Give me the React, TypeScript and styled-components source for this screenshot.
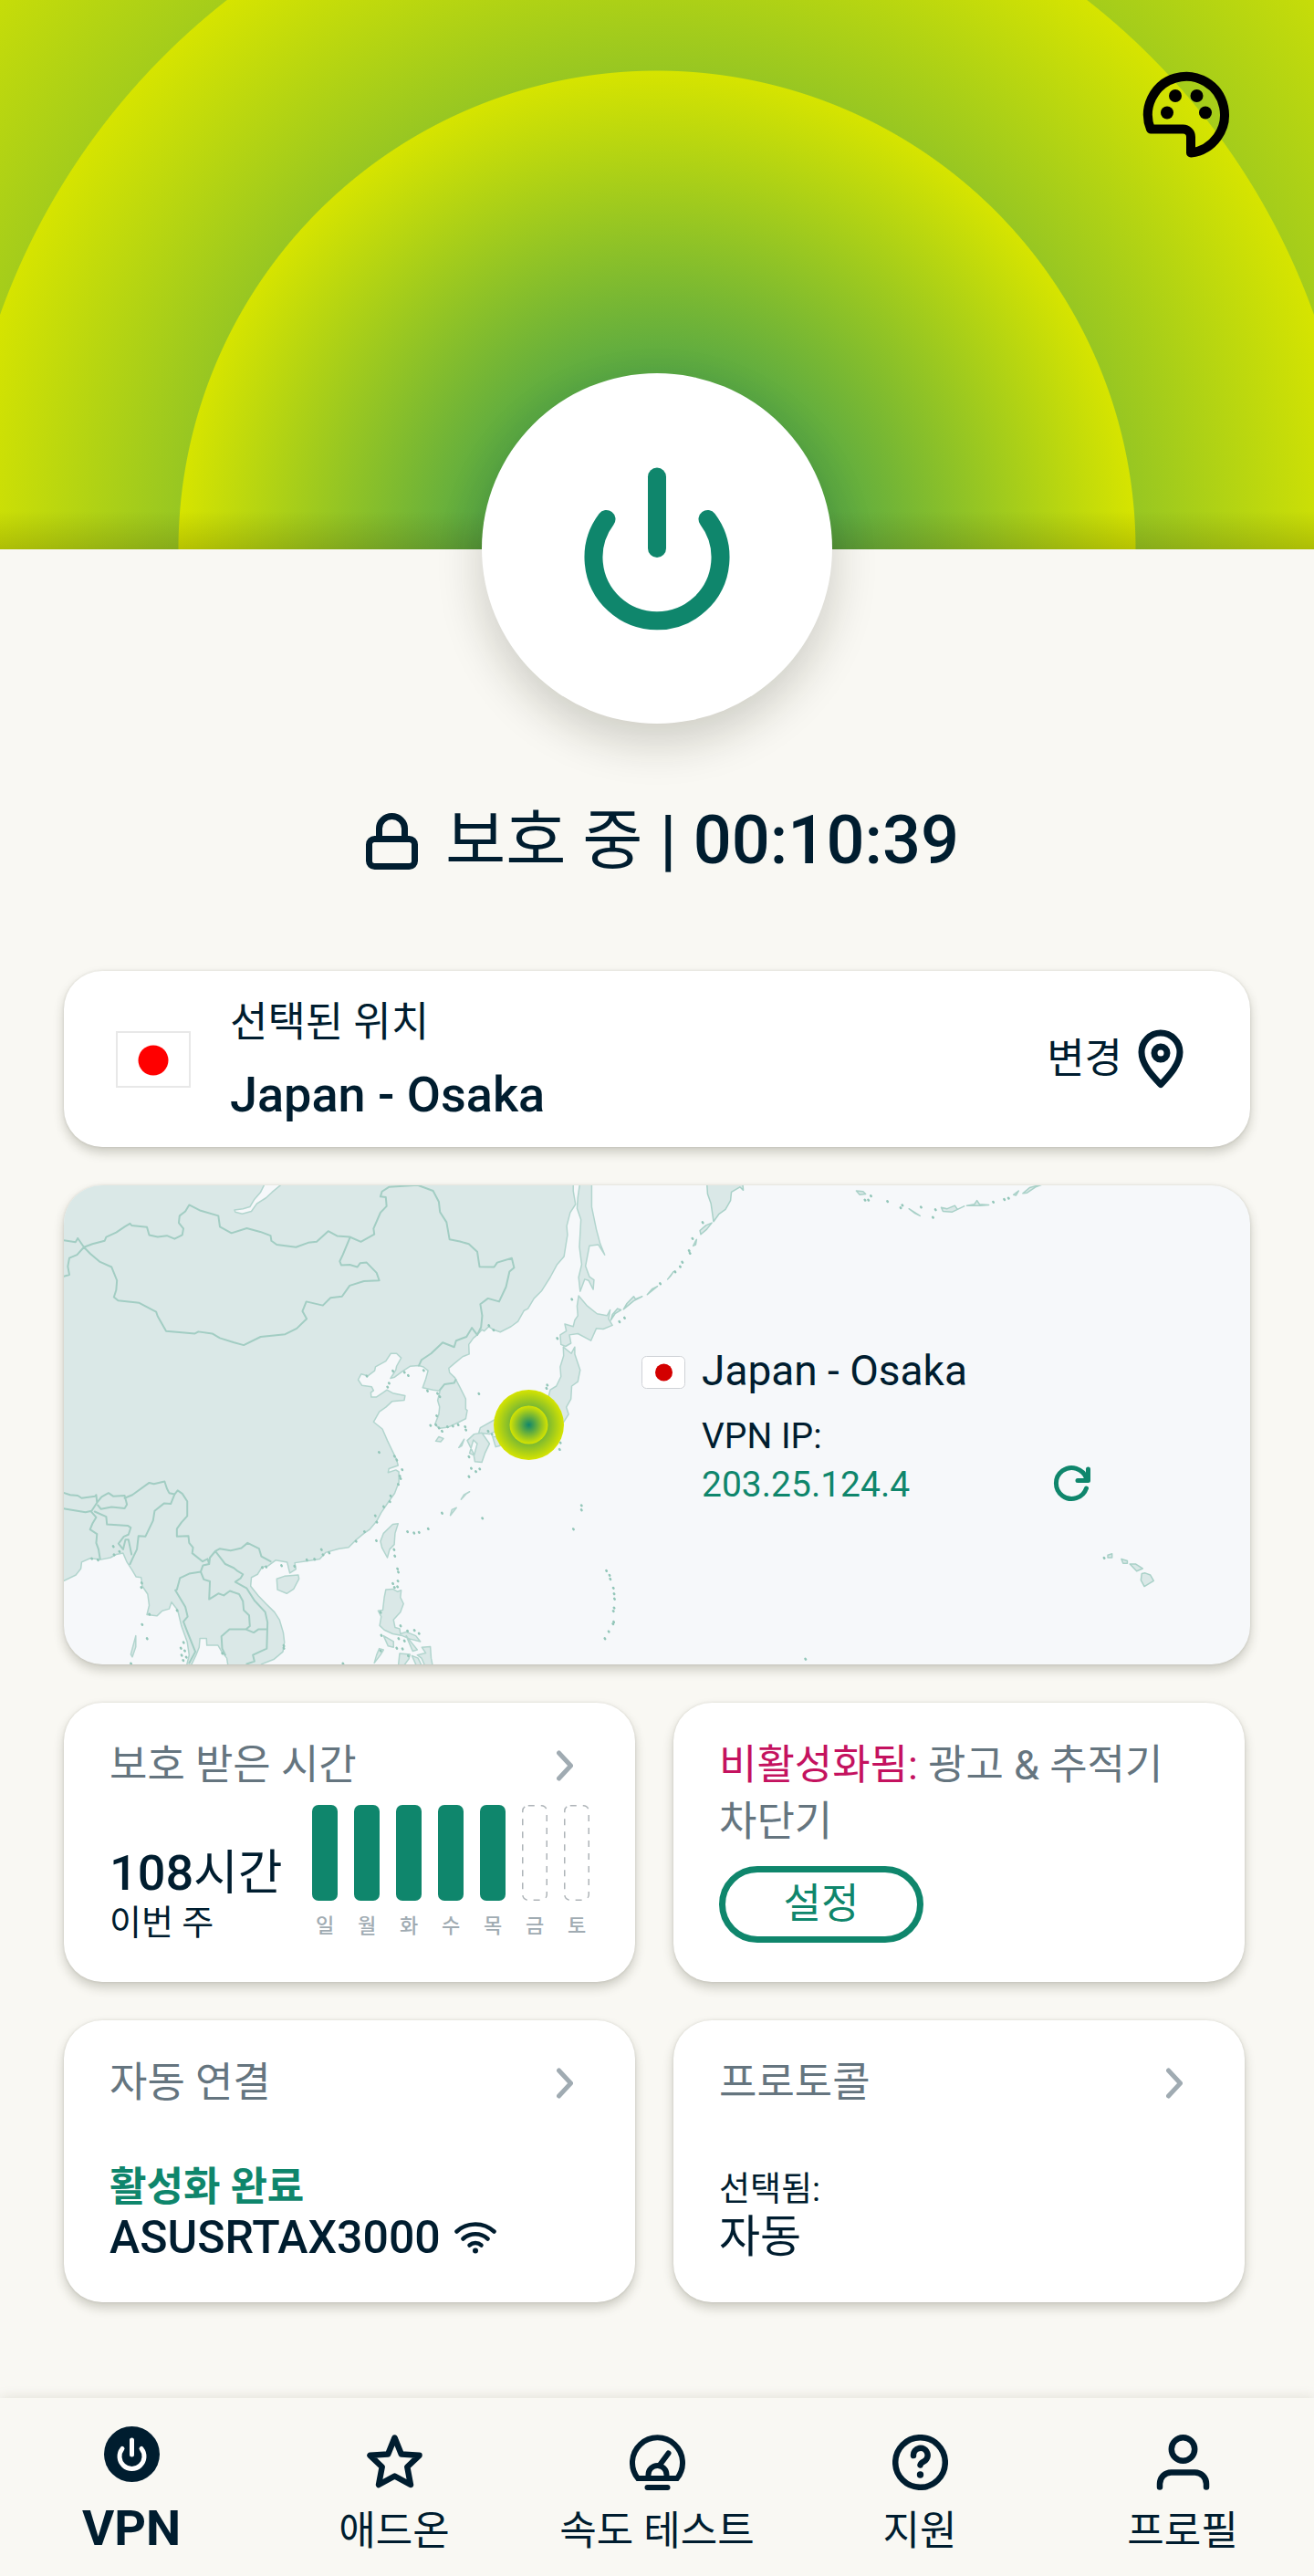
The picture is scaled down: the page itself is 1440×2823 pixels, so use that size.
import React from "react";
import styled, { createGlobalStyle } from "styled-components";

const GlobalStyle = createGlobalStyle`
  *, *::before, *::after { box-sizing: border-box; }
  body { margin: 0; background: #f9f8f3; }
  button { font: inherit; color: inherit; background: none; border: 0; padding: 0; cursor: pointer; }
  h1, h2, p, ul, ol { margin: 0; padding: 0; font: inherit; list-style: none; }
  svg { display: block; }
`;

const color = {
  ink: "#001d2f",
  muted: "#65757f",
  faint: "#a0abb2",
  green: "#0f866c",
  lime: "#d6e400",
  pink: "#c4125f",
  page: "#f9f8f3",
};

const shadow = "0 0 3px rgba(40, 40, 20, 0.12), 0 6px 12px rgba(40, 40, 20, 0.22)";

const Page = styled.div`
  font-family: Roboto, "Noto Sans CJK KR", sans-serif;
  color: ${color.ink};
  background: ${color.page};
`;

const Hero = styled.header`
  display: flex;
  flex-direction: column;
  align-items: center;
  padding-top: 66px;
  background:
    linear-gradient(to top, rgba(60, 60, 0, 0.2), rgba(60, 60, 0, 0) 42px),
    radial-gradient(circle 525px at 50% 100%, ${color.green}, ${color.lime} 524px, transparent 525px),
    radial-gradient(circle 765px at 50% 100%, ${color.green}, ${color.lime} 764px, transparent 765px),
    radial-gradient(circle 1020px at 50% 100%, ${color.green}, ${color.lime});
`;

const HeroBar = styled.div`
  display: flex;
  justify-content: flex-end;
  align-self: stretch;
  padding: 0 80px;
`;

const PowerButton = styled.button`
  display: grid;
  place-items: center;
  width: 384px;
  height: 384px;
  margin-top: 223px;
  margin-bottom: -191px;
  border-radius: 50%;
  background: #fff;
  box-shadow: 0 20px 50px rgba(30, 30, 10, 0.2);
`;

const Status = styled.h1`
  display: flex;
  justify-content: center;
  align-items: center;
  gap: 30px;
  padding: 269px 0 0 12px;
  font-size: 74px;
  line-height: 100px;
  font-weight: 500;
`;

const Korean = styled.span<{ $size: number }>`
  font-size: ${(p) => p.$size}px;
  font-weight: 400;
`;

const Main = styled.main`
  display: flex;
  flex-direction: column;
  gap: 42px;
  padding: 92px 70px 105px;
`;

const Card = styled.section`
  border-radius: 42px;
  background: #fff;
  box-shadow: ${shadow};
`;

const LocationCard = styled(Card)`
  display: flex;
  align-items: center;
  gap: 43px;
  padding: 18px 73px 17px 57px;
`;

const LocationText = styled.div`
  flex: 1;
`;

const Flag = styled.svg<{ $width: number; $height: number }>`
  width: ${(p) => p.$width}px;
  height: ${(p) => p.$height}px;
`;

const Caption = styled.p`
  font-size: 45px;
  line-height: 78px;
`;

const LocationName = styled.p`
  font-size: 54px;
  line-height: 80px;
  font-weight: 500;
`;

const ChangeButton = styled.button`
  display: flex;
  align-items: center;
  gap: 17px;
  font-size: 45px;
  line-height: 72px;
`;

const MapCard = styled(Card)`
  position: relative;
  overflow: hidden;
  display: grid;
  grid-template-columns: 48px 1fr;
  column-gap: 18px;
  padding: 171px 172px 170px 633px;
  background: #f6f8fa;
`;

const MapArt = styled.svg`
  position: absolute;
  inset: 0;
  width: 100%;
  height: 100%;

  path {
    vector-effect: non-scaling-stroke;
    stroke-linejoin: round;
    stroke-linecap: round;
  }
`;

const MapFlag = styled.div`
  position: relative;
  padding-top: 16px;
`;

const MapInfo = styled.div`
  position: relative;
`;

const MapTitle = styled.p`
  font-size: 46px;
  line-height: 64px;
  margin-bottom: 14px;
`;

const MapLine = styled.p<{ $accent?: boolean }>`
  display: flex;
  justify-content: space-between;
  align-items: center;
  font-size: 39px;
  line-height: 53px;
  color: ${(p) => (p.$accent ? color.green : color.ink)};
`;

const Grid = styled.div`
  display: grid;
  grid-template-columns: 1fr 1fr;
  gap: 42px;
  padding-right: 6px;
`;

const Tile = styled(Card)`
  display: flex;
  flex-direction: column;
  padding: 38px 50px 43px;
`;

const TileHead = styled.div`
  display: flex;
  justify-content: space-between;
  align-items: center;
  padding-right: 18px;
`;

const TileTitle = styled.h2`
  font-size: 45px;
  line-height: 62px;
  color: ${color.muted};
`;

const Alert = styled.span`
  color: ${color.pink};
`;

const SetupButton = styled.button`
  width: 224px;
  height: 84px;
  margin-top: 17px;
  border: 7px solid ${color.green};
  border-radius: 42px;
  color: ${color.green};
  font-size: 45px;
  line-height: 62px;
`;

const TimeBody = styled.div`
  display: flex;
  justify-content: space-between;
  align-items: flex-start;
  margin-top: 12px;
`;

const TimeText = styled.div`
  padding-top: 43px;
`;

const TimeValue = styled.p`
  font-size: 54px;
  line-height: 64px;
  font-weight: 500;
`;

const TimeNote = styled.p`
  font-size: 38px;
  line-height: 44px;
`;

const Chart = styled.ol`
  display: flex;
  gap: 18px;
`;

const Day = styled.li`
  width: 28px;
  display: flex;
  flex-direction: column;
  align-items: center;
  gap: 14px;
  font-size: 22px;
  line-height: 28px;
  font-weight: 500;
  color: ${color.faint};
`;

const TileBody = styled.div`
  margin-top: auto;
  padding-top: 56px;
`;

const Enabled = styled.p`
  font-size: 44px;
  line-height: 54px;
  font-weight: 700;
  color: ${color.green};
`;

const Selected = styled.p`
  font-size: 37px;
  line-height: 48px;
`;

const Network = styled.p`
  display: flex;
  align-items: center;
  gap: 14px;
  font-size: 50px;
  line-height: 56px;
  font-weight: 500;
`;

const Nav = styled.nav`
  display: grid;
  grid-template-columns: repeat(5, 1fr);
  min-height: 197px;
  background: ${color.page};
  box-shadow: 0 0 14px rgba(40, 40, 20, 0.12);
`;

const NavItem = styled.a<{ $active?: boolean }>`
  display: flex;
  flex-direction: column;
  align-items: center;
  gap: ${(p) => (p.$active ? 17 : 11)}px;
  padding-top: ${(p) => (p.$active ? 31 : 40)}px;
  font-size: ${(p) => (p.$active ? 54 : 44)}px;
  font-weight: ${(p) => (p.$active ? 700 : 400)};
  line-height: 68px;
  color: ${color.ink};
  text-decoration: none;
`;

function PaletteIcon() {
  return (
    <svg width="120" height="120" viewBox="0 0 120 120" fill="none" aria-hidden="true">
      <path d="M21 75.500H56.500A8.500 8.500 0 0 1 65 84V101.500A42 42 0 1 0 21 75.500Z" stroke="#000" strokeWidth="10" strokeLinejoin="round" />
      <g fill="#000">
        <circle cx="48" cy="39" r="7" />
        <circle cx="71.500" cy="39" r="7" />
        <circle cx="39" cy="57.500" r="7" />
        <circle cx="81" cy="57.500" r="7" />
      </g>
    </svg>
  );
}

function PowerIcon() {
  return (
    <svg width="160" height="180" viewBox="0 0 160 180" fill="none" stroke={color.green} strokeWidth="20" strokeLinecap="round" aria-hidden="true">
      <path d="M80 11.500V90" />
      <path d="M24.500 58A69.500 69.500 0 1 0 135.500 58" />
    </svg>
  );
}

function LockIcon() {
  return (
    <svg width="57" height="62" viewBox="0 0 57 62" fill="none" stroke={color.ink} strokeWidth="7" aria-hidden="true">
      <rect x="3.500" y="28.500" width="50" height="30" rx="6" />
      <path d="M14.500 28V17A14 13.500 0 0 1 42.500 17V28" />
    </svg>
  );
}

function PinIcon() {
  return (
    <svg width="50" height="66" viewBox="0 0 50 66" fill="none" aria-hidden="true">
      <path d="M25 60.500C15 50 4 38 4 25A21 21 0 0 1 46 25C46 38 35 50 25 60.500Z" stroke={color.ink} strokeWidth="7" strokeLinejoin="round" />
      <circle cx="25" cy="26" r="7" stroke={color.ink} strokeWidth="7" />
    </svg>
  );
}

function RefreshIcon() {
  return (
    <svg width="46" height="46" viewBox="0 3 46 46" fill="none" stroke={color.green} strokeWidth="5" strokeLinecap="round" strokeLinejoin="round" aria-hidden="true">
      <path d="M38.500 29A17 17 0 1 1 38.500 18" />
      <path d="M40.500 8V20.500H29" />
    </svg>
  );
}

function Chevron() {
  return (
    <svg width="18" height="34" viewBox="0 0 18 34" fill="none" stroke={color.faint} strokeWidth="5" strokeLinecap="round" strokeLinejoin="round" aria-hidden="true">
      <path d="M2.500 3L15.500 17L2.500 31" />
    </svg>
  );
}

function WifiIcon() {
  return (
    <svg width="48" height="36" viewBox="0 0 48 36" fill="none" stroke={color.ink} strokeWidth="4.500" strokeLinecap="round" aria-hidden="true">
      <path d="M3.500 11.500A30 30 0 0 1 44.500 11.500" />
      <path d="M10.500 19.500A20 20 0 0 1 37.500 19.500" />
      <path d="M17.500 26.500A10 10 0 0 1 30.500 26.500" />
      <circle cx="24" cy="32.500" r="3" fill={color.ink} stroke="none" />
    </svg>
  );
}

type IconName = "vpn" | "star" | "speed" | "help" | "profile";

function NavIcon({ name }: { name: IconName }) {
  const ink = { stroke: color.ink, strokeWidth: 6.5, strokeLinecap: "round" as const, strokeLinejoin: "round" as const, fill: "none" };
  return (
    <svg width="61" height="61" viewBox="0 0 61 61" aria-hidden="true">
      {name === "vpn" && (
        <>
          <circle cx="30.500" cy="30.500" r="30.500" fill={color.ink} />
          <path d="M30.500 15V31M20 24.500A13.500 13.500 0 1 0 41 24.500" fill="none" stroke="#fff" strokeWidth="5" strokeLinecap="round" />
        </>
      )}
      {name === "star" && (
        <path {...ink} d="M30.500 3.500L37.800 21.500L57.500 22.800L44.300 35.500L48 55L30.500 45.500L13 55L16.700 35.500L3.500 22.800L23.200 21.500Z" />
      )}
      {name === "speed" && (
        <g {...ink} strokeWidth="6">
          <path strokeLinejoin="miter" d="M9 48A27.500 27.500 0 1 1 52 48Z" />
          <path strokeLinecap="butt" d="M20.500 48V44A10 10 0 0 1 40.500 44V48" />
          <path d="M32.500 34L42.500 20.500" />
          <path d="M19.500 58H41.500" />
        </g>
      )}
      {name === "help" && (
        <>
          <circle {...ink} cx="30.500" cy="30.500" r="27.300" />
          <path {...ink} d="M23 23A7.800 7.800 0 1 1 34.500 29.500Q31 31 30.500 33.500" />
          <circle cx="30.500" cy="44" r="3.700" fill={color.ink} />
        </>
      )}
      {name === "profile" && (
        <>
          <circle {...ink} cx="30.500" cy="16" r="12.700" />
          <path {...ink} d="M5 57.500V54A12.500 12.500 0 0 1 17.500 41.500H43.500A12.500 12.500 0 0 1 56 54V57.500" />
        </>
      )}
    </svg>
  );
}

const mainland =
  "M10 10H1350V40L1356 82L1342 108L1333 150L1335 178L1330 215L1326 245L1308 270L1290 310L1268 352L1248 376L1232 408L1222 414L1206 448L1188 464L1160 481L1143 474L1130 464L1118 478L1112 474L1100 490L1090 500L1078 520L1079 550L1062 558L1040 580L1026 594L1028 608L1042 624L1056 656L1070 690V722L1074 726L1070 752L1050 764L1025 778L1002 782L990 770L1000 738L1002 715L997 695L1003 665L985 662L958 655L966 628L972 602L960 590L948 586L925 588L905 604L885 622L874 626L888 600L890 588L902 562L890 548H875L862 572L835 590L833 602L815 618L798 612L790 630L800 648L825 652L830 664L823 670L824 684H838L865 662L880 672L912 680L910 694L878 698L862 716L845 730L830 762L853 784L866 820L880 855L890 880L894 898L870 908L868 920L888 912L896 918V950L885 985L870 1010L850 1045L838 1072L820 1098L805 1110L785 1130L765 1154L740 1158L705 1170L690 1190L660 1196L625 1202L628 1222L612 1234L605 1200L575 1194L555 1212L540 1215L528 1238L512 1248L510 1275L530 1305L550 1330L572 1356L585 1380L595 1420L598 1450L594 1480L570 1504L540 1518L526 1530H452L448 1500L435 1480L425 1460H396L395 1438H378L376 1466L368 1490L352 1530H342L350 1490L345 1450L330 1400L320 1350L304 1325L298 1346L280 1352L266 1368L240 1364L246 1335L242 1300L228 1275L225 1248L212 1246L200 1222L188 1200L178 1172L160 1176L145 1186L120 1192L92 1188L70 1200L68 1220L55 1240L24 1258L10 1262Z";

const borders = [
  "M10 192L54 200L60 188L76 216L98 206L130 196L134 184L160 170L182 152L196 142L200 148L240 153L246 178L268 184L292 180L312 190L332 178L335 158L323 140L325 118L340 104L350 84L380 102L426 118L430 152L460 172L500 157L535 168L562 180L564 196L578 208L628 216L660 202L682 199L712 166L735 181L768 184L797 199L832 176L830 158L848 108L864 88L862 60L848 58L852 42L870 28L945 22L985 40L1000 74L1003 106L1020 138L1028 192L1055 198L1078 206L1100 230L1106 277L1144 278L1152 264L1190 250L1196 280L1184 292L1175 340L1157 386L1128 376L1108 394L1113 430L1110 466L1100 490",
  "M1100 490L1086 468L1072 496L1045 508L1040 528L1010 514L980 548L955 568L948 586",
  "M1044 630L1040 640L1015 644L1003 662",
  "M76 216L92 236L118 262L148 278L162 320L160 350L154 372L165 383L220 390L264 418L268 432L290 478L365 486L374 480L410 486L430 500L465 513L492 522L536 496L600 488L630 470L656 440L645 416L655 386L698 398L718 374L748 370L768 336L805 322L845 320L838 296L812 264L795 266L788 278L768 271L746 272L742 260L750 240L768 188",
  "M60 188L76 216L58 240L38 250L34 276L38 302L10 312",
  "M10 978L40 990L60 992L70 1000L105 994L108 990L110 1014L96 1040L80 1044L30 1034L10 1030",
  "M110 1014L122 996L140 984L152 994L182 992L188 1020L182 1032L148 1028L120 1034L112 1022",
  "M182 1000L202 990L246 952L258 956L286 948L292 970L298 984L312 988L302 1018L285 1016L260 1040L256 1070L236 1120L218 1118L214 1160L206 1180L196 1206",
  "M96 1044L108 1060L98 1080L92 1098L110 1112L108 1140L114 1160L118 1190M104 1042L134 1058L136 1082L190 1086L198 1092L192 1114L180 1120L166 1142L178 1160L184 1130L192 1130L200 1176",
  "M312 988L320 976L332 986L345 1010V1056L330 1076L318 1096V1120L348 1118L350 1140L360 1154L358 1172L385 1198L398 1190L402 1206L386 1210L380 1230L350 1236L326 1250L318 1286L314 1288L330 1320L340 1340L346 1370L335 1386L346 1420L366 1480L350 1515",
  "M402 1206L404 1186L418 1166L430 1158L458 1164L486 1156L502 1140L532 1158L538 1182L562 1198",
  "M418 1166L430 1184L444 1206L466 1218L474 1226L490 1238L484 1250L470 1262L500 1282L520 1320L548 1356L554 1388L552 1470L516 1490L520 1510L500 1518",
  "M380 1230L388 1254L404 1260L402 1316L426 1298L440 1304L456 1290L480 1300L490 1322L492 1350L506 1366L508 1400L498 1410L455 1410L434 1432L436 1470L444 1490M498 1410L518 1420L530 1410H552",
];

const islands = [
  "M1368 10L1362 60L1360 95L1370 130L1366 215L1372 270L1364 310L1368 354L1380 316L1390 320L1402 348L1404 318L1392 308L1382 275L1392 212L1415 208L1432 240L1420 205L1410 160L1398 90V10Z",
  "M1364 368L1385 398L1412 424L1438 430L1446 412L1442 440L1452 460L1428 472L1410 470L1396 508L1362 486L1340 490L1344 516L1330 526L1318 520L1316 490L1332 478L1328 456L1350 464L1354 444L1362 430L1360 400Z",
  "M1324 528L1345 548L1354 528V550L1368 600L1362 636L1346 650L1344 690L1332 716L1338 738L1310 790L1240 790L1160 785L1132 800L1104 796L1108 780L1150 752L1240 740L1284 690L1290 662L1306 650L1318 620L1316 590L1325 555Z",
  "M1074 820L1092 800L1112 796L1132 830L1120 860L1112 888L1094 886L1090 860L1082 840Z",
  "M1140 808L1160 808V836L1148 840Z",
  "M1090 818L1080 860L1092 866L1100 830Z",
  "M992 822L1000 808L1012 814L1005 824Z",
  "M848 1135L856 1110L880 1082L894 1080L886 1110L884 1145L872 1160L866 1186L852 1155Z",
  "M578 1252L598 1244L634 1240L636 1252L622 1284L604 1298L580 1286Z",
  "M862 1286L880 1284L892 1292L902 1288L900 1310L908 1330L900 1356L882 1380L886 1404L898 1408L900 1424L915 1418L940 1430L952 1448L925 1440L905 1430L880 1424L858 1412L846 1398L850 1370L842 1352L854 1350L858 1310Z",
  "M856 1430L882 1448L882 1466L868 1462Z",
  "M898 1485L925 1488L922 1502L905 1530H894Z",
  "M845 1470L856 1474L848 1490L832 1515L838 1490Z",
  "M956 1466L978 1464L980 1500L985 1530H966L955 1500L944 1490L966 1484Z",
  "M915 1430L928 1450L944 1474L932 1478Z",
  "M930 1492L946 1500L958 1530H944Z",
  "M211 1430V1465L202 1496L198 1488Z",
  "M1080 980L1065 990L1058 1004L1072 986Z",
  "M1046 1030L1030 1054L1034 1036Z",
  "M1066 816L1052 842L1060 836Z",
];

const islandDots: number[][] = [
  [1346, 378], [1308, 500], [1282, 646], [1280, 656], [1104, 673], [1316, 826], [1314, 847], [1078, 932], [1084, 906], [1096, 916], [1106, 908], [1078, 870],
  [1008, 1046], [1113, 1062], [1371, 1022], [1371, 1036], [1350, 1096], [918, 1104], [935, 1108], [948, 1106], [972, 1095], [837, 1132], [883, 1160], [885, 1180],
  [892, 1220], [894, 1230], [893, 1258], [880, 1266], [884, 1278], [892, 1276], [1436, 1226], [1444, 1240], [1446, 1252], [1454, 1280], [1456, 1298], [1457, 1314],
  [1456, 1342], [1454, 1352], [1455, 1386], [1453, 1392], [1442, 1416], [1432, 1438], [227, 1394], [240, 1438], [226, 1264], [225, 1278], [335, 1450], [328, 1468],
  [338, 1476], [330, 1490], [342, 1496], [334, 1506], [198, 1516], [318, 1350], [750, 1516], [844, 856], [884, 868], [890, 880], [898, 930], [904, 910], [900, 938],
  [894, 956], [874, 992], [872, 1010], [856, 1026], [834, 1054], [838, 1074], [806, 1104], [784, 1134], [694, 1160], [698, 1176], [714, 1170], [676, 1190], [656, 1192],
  [624, 1212], [590, 1210], [550, 1214], [540, 1216], [152, 1150], [154, 1176], [168, 1166], [96, 1188], [112, 1192], [246, 1362], [866, 652], [870, 640], [910, 606],
  [920, 616], [880, 602], [812, 618], [960, 600], [970, 664], [996, 672], [1002, 682], [994, 742], [992, 770], [978, 772], [1000, 780], [1008, 790], [1022, 776],
  [1036, 774], [1050, 770], [1068, 776], [1070, 786], [1130, 460], [1142, 474], [1128, 790], [1138, 800], [848, 1476], [848, 1356], [900, 1398], [850, 1428],
  [895, 1438], [910, 1445], [890, 1468], [905, 1470], [920, 1492], [918, 1414], [936, 1412], [948, 1422], [596, 1468], [436, 1484], [596, 1460],
];

const easternIslands = [
  "M246 10L248 50L256 80L262 136L275 112L290 98L302 70L304 44L324 28L332 38L330 10Z",
  "M258 140L246 160L232 176L230 164L244 148Z",
  "M222 192L220 208L214 212L220 196Z",
  "M168 292L154 316L162 304Z",
  "M130 338L106 364L118 346Z",
  "M94 370L74 384L50 410L58 392L74 370L78 378Z",
  "M44 412L30 424L20 444L24 426L36 408Z",
  "M598 40L614 42L620 50L606 52Z",
  "M722 96L748 118L736 110Z",
  "M798 92L812 96L830 86L836 98L852 88L824 106L802 104Z",
  "M858 86L876 82L882 70L888 82L910 84L890 86Z",
  "M968 52L980 40L974 54Z",
  "M990 48L1006 30L1040 18L1020 28L1000 46Z",
  "M1190 1178L1200 1174L1200 1186H1190Z",
  "M1222 1190L1236 1196L1236 1204H1226Z",
  "M1242 1206L1256 1206L1272 1220L1258 1228Z",
  "M1270 1236L1278 1234L1290 1240L1298 1258L1276 1276L1268 1256Z",
];

const easternDots: number[][] = [
  [236, 138], [212, 188], [204, 226], [206, 234], [188, 262], [183, 276], [171, 292], [136, 329], [40, 448], [52, 436], [618, 68], [626, 68], [632, 55], [671, 72],
  [702, 92], [706, 84], [750, 90], [778, 122], [784, 98], [920, 74], [946, 66], [956, 62], [1181, 1186], [478, 1502],
];

const dots = (points: number[][]) => points.map(([x, y]) => `M${x} ${y}l1 2`).join("");

function RegionMap() {
  return (
    <MapArt viewBox="0 0 1300 525" preserveAspectRatio="xMidYMid slice" aria-hidden="true">
      <defs>
        <radialGradient id="pulse">
          <stop offset="0" stopColor={color.green} />
          <stop offset="1" stopColor={color.lime} />
        </radialGradient>
      </defs>
      <g transform="translate(-10 -8) scale(0.4209 0.35077)" fill="#dae8e7" stroke="#b2d5ce" strokeWidth="1.500">
        <path d={mainland} />
        <path d="M546 20L536 44L520 66L508 90L490 96L468 100L470 106L488 112L512 104L526 80L550 62L566 44L596 14Z" fill="#f6f8fa" />
        <path d={borders.join("")} fill="none" stroke="#a2cdc3" strokeWidth="2" />
        <path d={islands.join("")} />
        <path d={dots(islandDots)} stroke="#93c6b9" strokeWidth="2.500" />
      </g>
      <g transform="translate(590 -8) scale(0.46556 0.35077)" fill="#dae8e7" stroke="#a9d1c8" strokeWidth="1.500">
        <path d={easternIslands.join("")} />
        <path d={dots(easternDots)} stroke="#93c6b9" strokeWidth="2.500" />
      </g>
      <circle cx="509.500" cy="262.500" r="38.500" fill="url(#pulse)" />
      <circle cx="509.500" cy="262.500" r="21" fill="url(#pulse)" />
    </MapArt>
  );
}

const week = [
  { day: "일", used: true },
  { day: "월", used: true },
  { day: "화", used: true },
  { day: "수", used: true },
  { day: "목", used: true },
  { day: "금", used: false },
  { day: "토", used: false },
];

function DayBar({ used }: { used: boolean }) {
  return (
    <svg width="28" height="105" viewBox="0 0 28 105" aria-hidden="true">
      {used ? (
        <rect width="28" height="105" rx="7" fill={color.green} />
      ) : (
        <rect x="0.750" y="0.750" width="26.500" height="103.500" rx="6" fill="none" stroke="#aeb4b8" strokeWidth="1.500" strokeDasharray="7 7" />
      )}
    </svg>
  );
}

const navItems: { icon: IconName; label: string }[] = [
  { icon: "vpn", label: "VPN" },
  { icon: "star", label: "애드온" },
  { icon: "speed", label: "속도 테스트" },
  { icon: "help", label: "지원" },
  { icon: "profile", label: "프로필" },
];

export default function App() {
  return (
    <Page lang="ko">
      <GlobalStyle />
      <Hero>
        <HeroBar>
          <button type="button" aria-label="테마">
            <PaletteIcon />
          </button>
        </HeroBar>
        <PowerButton type="button" aria-label="VPN 끄기">
          <PowerIcon />
        </PowerButton>
      </Hero>

      <Status>
        <LockIcon />
        <span>
          <Korean $size={72}>보호 중</Korean> | 00:10:39
        </span>
      </Status>

      <Main>
        <LocationCard>
          <Flag $width={82} $height={62} viewBox="0 0 82 62" aria-hidden="true">
            <rect x="1" y="1" width="80" height="60" fill="#fff" stroke="#e8e8e8" strokeWidth="2" />
            <circle cx="41" cy="32" r="16.500" fill="#f00" />
          </Flag>
          <LocationText>
            <Caption>선택된 위치</Caption>
            <LocationName>Japan - Osaka</LocationName>
          </LocationText>
          <ChangeButton type="button">
            변경
            <PinIcon />
          </ChangeButton>
        </LocationCard>

        <MapCard>
          <RegionMap />
          <MapFlag>
            <Flag $width={48} $height={36} viewBox="0 0 48 36" aria-hidden="true">
              <rect x="0.500" y="0.500" width="47" height="35" rx="5" fill="#fff" stroke="#cfd2d6" />
              <circle cx="24.500" cy="18" r="9.500" fill="#d30000" />
            </Flag>
          </MapFlag>
          <MapInfo>
            <MapTitle>Japan - Osaka</MapTitle>
            <MapLine>VPN IP:</MapLine>
            <MapLine $accent>
              203.25.124.4
              <button type="button" aria-label="새로 고침">
                <RefreshIcon />
              </button>
            </MapLine>
          </MapInfo>
        </MapCard>

        <Grid>
          <Tile>
            <TileHead>
              <TileTitle>보호 받은 시간</TileTitle>
              <Chevron />
            </TileHead>
            <TimeBody>
              <TimeText>
                <TimeValue>
                  108<Korean $size={53}>시간</Korean>
                </TimeValue>
                <TimeNote>이번 주</TimeNote>
              </TimeText>
              <Chart>
                {week.map(({ day, used }) => (
                  <Day key={day}>
                    <DayBar used={used} />
                    {day}
                  </Day>
                ))}
              </Chart>
            </TimeBody>
          </Tile>

          <Tile>
            <TileTitle>
              <Alert>비활성화됨:</Alert> 광고 &amp; 추적기 차단기
            </TileTitle>
            <SetupButton type="button">설정</SetupButton>
          </Tile>

          <Tile>
            <TileHead>
              <TileTitle>자동 연결</TileTitle>
              <Chevron />
            </TileHead>
            <TileBody>
              <Enabled>활성화 완료</Enabled>
              <Network>
                ASUSRTAX3000
                <WifiIcon />
              </Network>
            </TileBody>
          </Tile>

          <Tile>
            <TileHead>
              <TileTitle>프로토콜</TileTitle>
              <Chevron />
            </TileHead>
            <TileBody>
              <Selected>선택됨:</Selected>
              <Network>
                <Korean $size={49}>자동</Korean>
              </Network>
            </TileBody>
          </Tile>
        </Grid>
      </Main>

      <Nav>
        {navItems.map(({ icon, label }, i) => (
          <NavItem key={icon} href={`#${icon}`} $active={i === 0} aria-current={i === 0 ? "page" : undefined}>
            <NavIcon name={icon} />
            {label}
          </NavItem>
        ))}
      </Nav>
    </Page>
  );
}
